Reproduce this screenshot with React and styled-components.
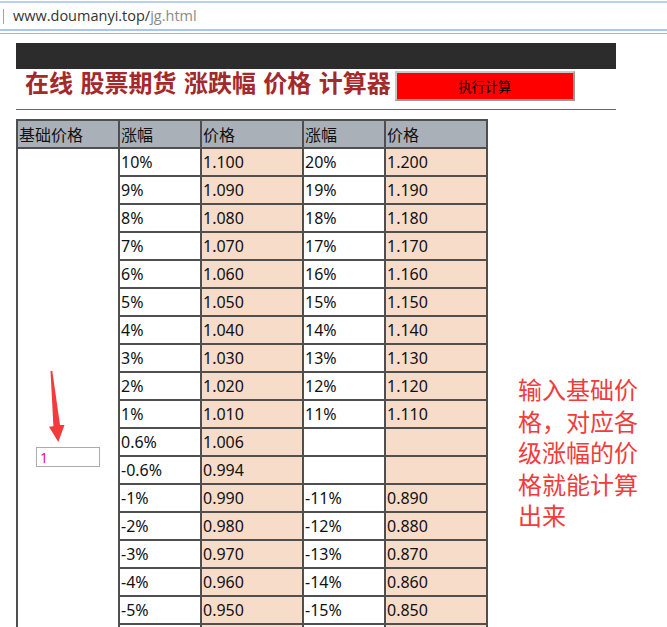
import styled, { createGlobalStyle } from "styled-components";

const GlobalStyle = createGlobalStyle`
  html, body {
    margin: 0;
    padding: 0;
    background: #fff;
  }
  body {
    font-family: "Noto Sans", "Noto Sans CJK SC", sans-serif;
    color: #111;
  }
`;

function buildRows() {
  const rows = [];
  for (let i = 10; i >= 1; i--) {
    rows.push({
      a: `${i}%`,
      pa: (1 + i / 100).toFixed(3),
      b: `${i + 10}%`,
      pb: (1 + (i + 10) / 100).toFixed(3),
    });
  }
  rows.push({ a: "0.6%", pa: "1.006", b: "", pb: "" });
  rows.push({ a: "-0.6%", pa: "0.994", b: "", pb: "" });
  for (let i = 1; i <= 10; i++) {
    rows.push({
      a: `-${i}%`,
      pa: (1 - i / 100).toFixed(3),
      b: `-${i + 10}%`,
      pb: (1 - (i + 10) / 100).toFixed(3),
    });
  }
  return rows;
}

const rows = buildRows();

export default function App() {
  return (
    <Root>
      <GlobalStyle />
      <AddressBar>
        <UrlField>
          <Caret />
          <Host>www.doumanyi.top/</Host>
          <PathPart>jg.html</PathPart>
        </UrlField>
        <ChromeLine />
      </AddressBar>

      <Page>
        <TopBar />
        <TitleRow>
          <Title>在线 股票期货 涨跌幅 价格 计算器</Title>
          <RunButton>执行计算</RunButton>
        </TitleRow>
        <Rule />

        <PriceTable>
          <thead>
            <tr>
              <HeadCell $w={98}>基础价格</HeadCell>
              <HeadCell $w={78}>涨幅</HeadCell>
              <HeadCell $w={98}>价格</HeadCell>
              <HeadCell $w={78}>涨幅</HeadCell>
              <HeadCell $w={98}>价格</HeadCell>
            </tr>
          </thead>
          <tbody>
            {rows.map((r, i) => (
              <tr key={i}>
                {i === 0 && (
                  <BaseCell rowSpan={rows.length}>
                    <InputWrap>
                      <Arrow viewBox="0 0 16 72" width="16" height="72">
                        <polygon
                          points="1.5,0 3.3,0 11,54 15.5,54 9.3,71 0,55.7 4.4,55.2"
                          fill="#f23b3b"
                        />
                      </Arrow>
                      <BaseInput defaultValue="1" />
                    </InputWrap>
                  </BaseCell>
                )}
                <Cell>{r.a}</Cell>
                <Cell $price>{r.pa}</Cell>
                <Cell>{r.b}</Cell>
                <Cell $price>{r.pb}</Cell>
              </tr>
            ))}
          </tbody>
        </PriceTable>
      </Page>

      <Note>输入基础价格，对应各级涨幅的价格就能计算出来</Note>
    </Root>
  );
}

const Root = styled.div`
  position: relative;
  width: 667px;
`;

const AddressBar = styled.div`
  padding-top: 1px;
`;

const UrlField = styled.div`
  display: flex;
  align-items: center;
  height: 26px;
  border-top: 2px solid #b7cff6;
  border-bottom: 2px solid #a9c5f2;
  font-family: "Open Sans", sans-serif;
  font-size: 14.5px;
`;

const Caret = styled.span`
  display: inline-block;
  width: 1px;
  height: 15px;
  background: #a0a0a0;
  margin: 0 9px 0 3px;
`;

const Host = styled.span`
  color: #333;
  line-height: 24px;
`;

const PathPart = styled.span`
  color: #8a8a8a;
  line-height: 24px;
`;

const ChromeLine = styled.div`
  height: 1px;
  margin-top: 2px;
  background: #b4b4b4;
`;

const Page = styled.div`
  width: 600px;
  margin: 9px 0 0 16px;
`;

const TopBar = styled.div`
  height: 26px;
  background: #2c2c2c;
`;

const TitleRow = styled.div`
  display: flex;
  align-items: flex-start;
  height: 40px;
  padding-left: 9px;
`;

const Title = styled.h1`
  margin: 0;
  font-family: "Noto Sans CJK SC", sans-serif;
  font-size: 24px;
  font-weight: 700;
  line-height: 26px;
  word-spacing: 2px;
  color: #a3292b;
  white-space: nowrap;
`;

const RunButton = styled.button`
  width: 180px;
  height: 30px;
  margin: 2px 0 0 4px;
  padding: 0;
  background: #ff0000;
  border: 2px solid #999;
  border-top-color: #c8c8c8;
  border-left-color: #c8c8c8;
  font-family: "Noto Sans CJK SC", sans-serif;
  font-size: 13.3px;
  color: #000;
`;

const Rule = styled.div`
  height: 1px;
  background: #666;
  margin-bottom: 9px;
`;

const PriceTable = styled.table`
  border-collapse: collapse;
  table-layout: fixed;
  border: 2px solid #4f4f4f;
  font-size: 16px;
`;

const HeadCell = styled.th`
  width: ${(p) => p.$w}px;
  height: 26px;
  padding: 0 1px;
  border: 2px solid #4f4f4f;
  background: #a9b0b7;
  font-weight: 400;
  text-align: left;
  white-space: nowrap;
`;

const Cell = styled.td`
  height: 26px;
  padding: 0 1px;
  border: 2px solid #4f4f4f;
  background: ${(p) => (p.$price ? "#f7dcca" : "#fff")};
  white-space: nowrap;
`;

const BaseCell = styled.td`
  padding: 0;
  border: 2px solid #4f4f4f;
  background: #fff;
  text-align: center;
  vertical-align: middle;
`;

const InputWrap = styled.div`
  position: relative;
  display: inline-block;
  vertical-align: middle;
`;

const Arrow = styled.svg`
  position: absolute;
  left: 13px;
  top: -76px;
  display: block;
`;

const BaseInput = styled.input`
  display: block;
  box-sizing: border-box;
  width: 64px;
  height: 20px;
  padding: 0 3px;
  border: 1px solid #ababab;
  outline: none;
  font-family: "Open Sans", sans-serif;
  font-size: 14px;
  color: #e6007e;
`;

const Note = styled.div`
  position: absolute;
  left: 518px;
  top: 373px;
  width: 121px;
  font-family: "Noto Sans CJK SC", sans-serif;
  font-size: 24px;
  line-height: 31.5px;
  color: #f23b3b;
`;
